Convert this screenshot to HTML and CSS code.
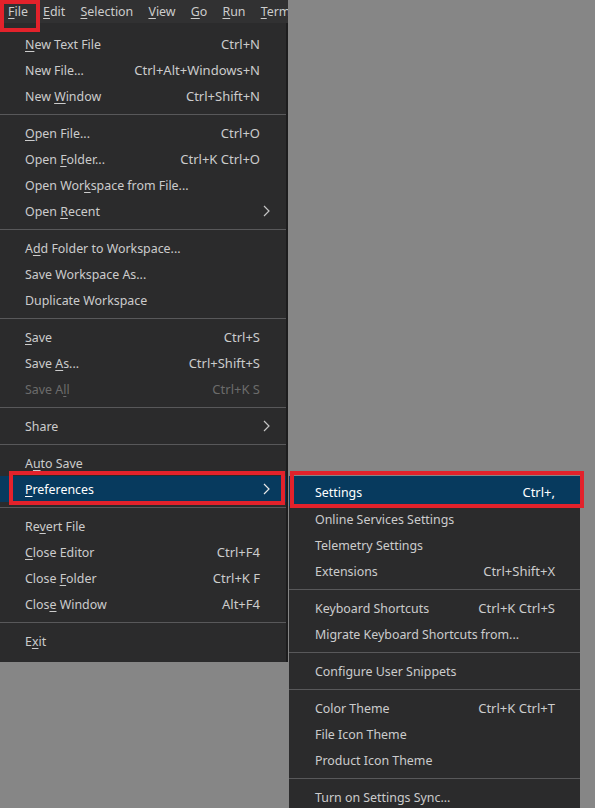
FILE: index.html
```html
<!DOCTYPE html>
<html>
<head>
<meta charset="utf-8">
<link rel="stylesheet" href="styles.css">
</head>
<body>
<div class="screen">
  <div class="window">
    <div class="menubar">
      <span class="mb-item"><u>F</u>ile</span>
      <span class="mb-item"><u>E</u>dit</span>
      <span class="mb-item"><u>S</u>election</span>
      <span class="mb-item"><u>V</u>iew</span>
      <span class="mb-item"><u>G</u>o</span>
      <span class="mb-item"><u>R</u>un</span>
      <span class="mb-item"><u>T</u>erm</span>
    </div>
    <div class="menu">
      <div class="row"><span class="label"><u>N</u>ew Text File</span><span class="key">Ctrl+N</span></div>
      <div class="row"><span class="label">New File...</span><span class="key">Ctrl+Alt+Windows+N</span></div>
      <div class="row"><span class="label">New <u>W</u>indow</span><span class="key">Ctrl+Shift+N</span></div>
      <div class="sep"></div>
      <div class="row"><span class="label"><u>O</u>pen File...</span><span class="key">Ctrl+O</span></div>
      <div class="row"><span class="label">Open <u>F</u>older...</span><span class="key">Ctrl+K Ctrl+O</span></div>
      <div class="row"><span class="label">Open Wor<u>k</u>space from File...</span></div>
      <div class="row"><span class="label">Open <u>R</u>ecent</span><svg class="chev" viewBox="0 0 7 12" width="7" height="12"><polyline points="1,1 6,6 1,11" fill="none" stroke="#c5c5c5" stroke-width="1.2"/></svg></div>
      <div class="sep"></div>
      <div class="row"><span class="label">A<u>d</u>d Folder to Workspace...</span></div>
      <div class="row"><span class="label">Save Workspace As...</span></div>
      <div class="row"><span class="label">Duplicate Workspace</span></div>
      <div class="sep"></div>
      <div class="row"><span class="label"><u>S</u>ave</span><span class="key">Ctrl+S</span></div>
      <div class="row"><span class="label">Save <u>A</u>s...</span><span class="key">Ctrl+Shift+S</span></div>
      <div class="row disabled"><span class="label">Save A<u>l</u>l</span><span class="key">Ctrl+K S</span></div>
      <div class="sep"></div>
      <div class="row"><span class="label">Share</span><svg class="chev" viewBox="0 0 7 12" width="7" height="12"><polyline points="1,1 6,6 1,11" fill="none" stroke="#c5c5c5" stroke-width="1.2"/></svg></div>
      <div class="sep"></div>
      <div class="row"><span class="label">A<u>u</u>to Save</span></div>
      <div class="row active"><span class="label"><u>P</u>references</span><svg class="chev" viewBox="0 0 7 12" width="7" height="12"><polyline points="1,1 6,6 1,11" fill="none" stroke="#e8e8e8" stroke-width="1.2"/></svg></div>
      <div class="sep"></div>
      <div class="row"><span class="label">Re<u>v</u>ert File</span></div>
      <div class="row"><span class="label"><u>C</u>lose Editor</span><span class="key">Ctrl+F4</span></div>
      <div class="row"><span class="label">Close <u>F</u>older</span><span class="key">Ctrl+K F</span></div>
      <div class="row"><span class="label">Clos<u>e</u> Window</span><span class="key">Alt+F4</span></div>
      <div class="sep"></div>
      <div class="row"><span class="label">E<u>x</u>it</span></div>
    </div>
  </div>

  <div class="submenu">
    <div class="row active first"><span class="label">Settings</span><span class="key">Ctrl+,</span></div>
    <div class="row"><span class="label">Online Services Settings</span></div>
    <div class="row"><span class="label">Telemetry Settings</span></div>
    <div class="row"><span class="label">Extensions</span><span class="key">Ctrl+Shift+X</span></div>
    <div class="sep"></div>
    <div class="row"><span class="label">Keyboard Shortcuts</span><span class="key">Ctrl+K Ctrl+S</span></div>
    <div class="row"><span class="label">Migrate Keyboard Shortcuts from...</span></div>
    <div class="sep"></div>
    <div class="row"><span class="label">Configure User Snippets</span></div>
    <div class="sep"></div>
    <div class="row"><span class="label">Color Theme</span><span class="key">Ctrl+K Ctrl+T</span></div>
    <div class="row"><span class="label">File Icon Theme</span></div>
    <div class="row"><span class="label">Product Icon Theme</span></div>
    <div class="sep"></div>
    <div class="row"><span class="label">Turn on Settings Sync...</span></div>
  </div>

  <div class="mark mark-file"></div>
  <div class="mark mark-prefs"></div>
  <div class="mark mark-settings"></div>
</div>
</body>
</html>
```

FILE: styles.css
```css
html, body {
  margin: 0;
  padding: 0;
}
body {
  background: #868686;
  font-family: "Noto Sans", "Open Sans", sans-serif;
  font-size: 12.4px;
  color: #cccccc;
  width: 595px;
  height: 808px;
  overflow: hidden;
}
.screen {
  position: relative;
  width: 595px;
  height: 808px;
}
.window {
  width: 288px;
  display: flex;
  flex-direction: column;
}
u {
  text-decoration: underline;
  text-underline-offset: 2px;
  text-decoration-thickness: 1px;
}
.menubar {
  height: 23px;
  background: #313132;
  display: flex;
  align-items: center;
  white-space: nowrap;
  overflow: hidden;
  padding-left: 0.5px;
}
.mb-item {
  padding: 1px 7.6px 0;
  line-height: 22px;
  color: #cccccc;
  flex: none;
}
.menu {
  background: #2b2b2c;
  border-right: 2px solid #1d1d1e;
  padding: 8px 0;
}
.row {
  height: 26px;
  display: flex;
  align-items: center;
  padding: 0 26px 0 25px;
  white-space: nowrap;
}
.row .label {
  flex: 1;
}
.row .key {
  font-size: 13px;
  color: #cccccc;
}
.row.disabled {
  color: #6b6b6b;
}
.row.disabled .key {
  color: #6b6b6b;
}
.row.active {
  background: #073a5e;
  color: #ffffff;
}
.row.active .key {
  color: #ffffff;
}
.chev {
  margin-right: -10px;
  display: block;
}
.sep {
  height: 1px;
  margin: 5px 0;
  background: #58585a;
}
.submenu {
  position: absolute;
  left: 289px;
  top: 476px;
  width: 291px;
  background: #2b2b2c;
}
.submenu .row {
  padding: 0 25px 0 26px;
}
.submenu .row.first {
  height: 30px;
  align-items: flex-end;
  line-height: 27px;
}
.mark {
  position: absolute;
  border: 4px solid #e3222b;
  box-sizing: border-box;
}
.mark-file {
  left: 0;
  top: 0;
  width: 40px;
  height: 32px;
}
.mark-prefs {
  left: 9px;
  top: 471px;
  width: 276px;
  height: 34px;
}
.mark-settings {
  left: 290px;
  top: 471px;
  width: 294px;
  height: 37px;
}
```
